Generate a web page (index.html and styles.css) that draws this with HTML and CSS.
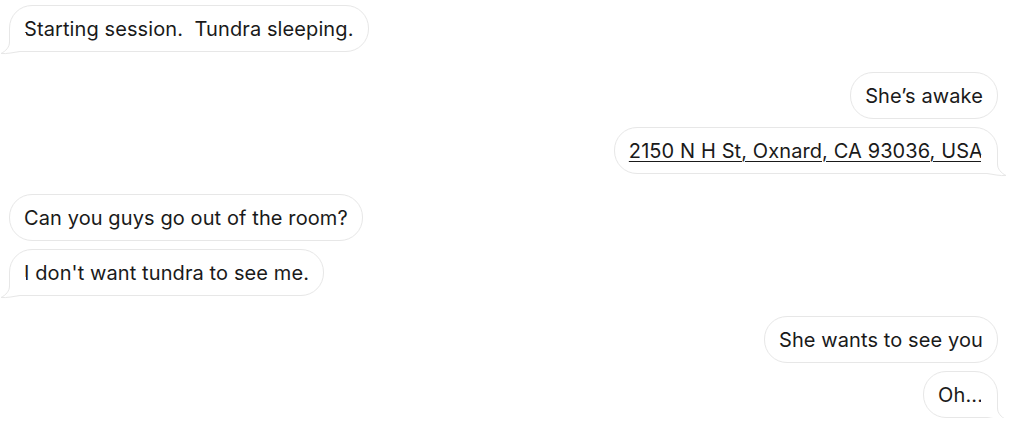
FILE: index.html
```html
<!DOCTYPE html>
<html lang="en">
<head>
<meta charset="utf-8">
<title>Chat</title>
<link rel="stylesheet" href="styles.css">
</head>
<body>
<div class="chat">
  <div class="group left">
    <div class="bubble tail">Starting session.&nbsp; Tundra sleeping.<svg class="tail-svg" viewBox="0 0 26 20" width="26" height="20"><path class="tail-fill" d="M9.5 -1 L9.5 8 C9.5 13 6 17 1 19.5 C7 20 13 18.5 20 17.5 L26 17.5 L26 -1 Z"/><path class="tail-line" d="M9.5 -1 L9.5 8 C9.5 13 6 17 1 19.5 C7 20 13 18.5 20 17.5 L26 17.5"/></svg></div>
  </div>
  <div class="group right">
    <div class="bubble">She’s awake</div>
    <div class="bubble tail"><span class="link">2150 N H St, Oxnard, CA 93036, USA</span><svg class="tail-svg" viewBox="0 0 26 20" width="26" height="20"><path class="tail-fill" d="M9.5 -1 L9.5 8 C9.5 13 6 17 1 19.5 C7 20 13 18.5 20 17.5 L26 17.5 L26 -1 Z"/><path class="tail-line" d="M9.5 -1 L9.5 8 C9.5 13 6 17 1 19.5 C7 20 13 18.5 20 17.5 L26 17.5"/></svg></div>
  </div>
  <div class="group left">
    <div class="bubble">Can you guys go out of the room?</div>
    <div class="bubble tail">I don't want tundra to see me.<svg class="tail-svg" viewBox="0 0 26 20" width="26" height="20"><path class="tail-fill" d="M9.5 -1 L9.5 8 C9.5 13 6 17 1 19.5 C7 20 13 18.5 20 17.5 L26 17.5 L26 -1 Z"/><path class="tail-line" d="M9.5 -1 L9.5 8 C9.5 13 6 17 1 19.5 C7 20 13 18.5 20 17.5 L26 17.5"/></svg></div>
  </div>
  <div class="group right">
    <div class="bubble">She wants to see you</div>
    <div class="bubble tail">Oh...<svg class="tail-svg" viewBox="0 0 26 20" width="26" height="20"><path class="tail-fill" d="M9.5 -1 L9.5 8 C9.5 13 6 17 1 19.5 C7 20 13 18.5 20 17.5 L26 17.5 L26 -1 Z"/><path class="tail-line" d="M9.5 -1 L9.5 8 C9.5 13 6 17 1 19.5 C7 20 13 18.5 20 17.5 L26 17.5"/></svg></div>
  </div>
</div>
</body>
</html>
```

FILE: styles.css
```css
html, body {
  margin: 0;
  background: #ffffff;
}

body {
  font-family: "Inter", "Liberation Sans", Arial, sans-serif;
  color: #1a1a1a;
}

.chat {
  display: flex;
  flex-direction: column;
  gap: 20px;
  padding: 5px 25px 0 9px;
}

.group {
  display: flex;
  flex-direction: column;
  gap: 8px;
}

.group.left {
  align-items: flex-start;
}

.group.right {
  align-items: flex-end;
}

.bubble {
  position: relative;
  box-sizing: border-box;
  height: 47px;
  padding: 0 14px;
  display: flex;
  align-items: center;
  background: #ffffff;
  border: 1px solid #e7e7e7;
  border-radius: 23px;
  font-size: 20px;
  letter-spacing: 0.1px;
  white-space: nowrap;
}

.link {
  text-decoration: underline;
  text-decoration-thickness: 1px;
  text-underline-offset: 3px;
}

.tail-svg {
  position: absolute;
  bottom: -3px;
  overflow: visible;
}

.left .tail {
  border-bottom-left-radius: 0;
}

.left .tail .tail-svg {
  left: -10px;
}

.right .tail {
  border-bottom-right-radius: 0;
}

.right .tail .tail-svg {
  right: -10px;
  transform: scaleX(-1);
}

.tail-fill {
  fill: #ffffff;
  stroke: none;
}

.tail-line {
  fill: none;
  stroke: #e7e7e7;
  stroke-width: 1;
}
```
